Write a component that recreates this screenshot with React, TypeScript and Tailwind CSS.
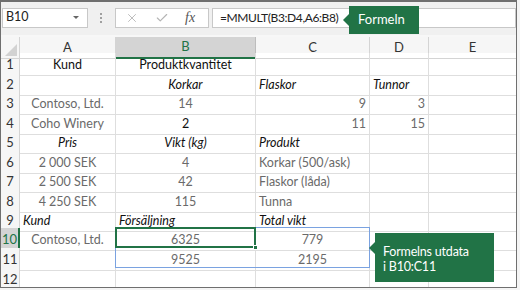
import { X, Check } from 'lucide-react';

type Cell = {
  t?: string;
  a?: 'l' | 'c' | 'r';
  i?: boolean;
  dark?: boolean;
};

const cols = ['A', 'B', 'C', 'D', 'E'];
const heights = [20, 19, 20, 19, 20, 19, 20, 19, 19, 20, 20, 18];

const rows: Cell[][] = [
  [{ t: 'Kund', a: 'c', dark: true }, { t: 'Produktkvantitet', a: 'c', dark: true }, {}, {}, {}],
  [{}, { t: 'Korkar', a: 'c', i: true }, { t: 'Flaskor', i: true }, { t: 'Tunnor', i: true }, {}],
  [{ t: 'Contoso, Ltd.', a: 'c' }, { t: '14', a: 'c' }, { t: '9', a: 'r' }, { t: '3', a: 'r' }, {}],
  [{ t: 'Coho Winery', a: 'c' }, { t: '2', a: 'c', dark: true }, { t: '11', a: 'r' }, { t: '15', a: 'r' }, {}],
  [{ t: 'Pris', a: 'c', i: true }, { t: 'Vikt (kg)', a: 'c', i: true }, { t: 'Produkt', i: true }, {}, {}],
  [{ t: '2 000 SEK', a: 'c' }, { t: '4', a: 'c' }, { t: 'Korkar (500/ask)' }, {}, {}],
  [{ t: '2 500 SEK', a: 'c' }, { t: '42', a: 'c' }, { t: 'Flaskor (låda)' }, {}, {}],
  [{ t: '4 250 SEK', a: 'c' }, { t: '115', a: 'c' }, { t: 'Tunna' }, {}, {}],
  [{ t: 'Kund', i: true }, { t: 'Försäljning', i: true }, { t: 'Total vikt', i: true }, {}, {}],
  [{ t: 'Contoso, Ltd.', a: 'c' }, { t: '6325', a: 'c' }, { t: '779', a: 'c' }, {}, {}],
  [{}, { t: '9525', a: 'c' }, { t: '2195', a: 'c' }, {}, {}],
  [{}, {}, {}, {}, {}],
];

const grid = 'grid grid-cols-[19px_96px_140px_114px_59px_88px]';

export default function App() {
  return (
    <div className="w-[520px] h-[290px] bg-[#f4f4f4] font-['Lato',sans-serif]">
      <div className="relative w-[517px] h-[288px] border border-t-2 border-[#6f6f6f] bg-white overflow-hidden">
        {/* Formula bar */}
        <div className="flex items-center h-[33px] bg-[#f0f0f0] pb-[2px]">
          <div className="flex items-center justify-between w-[86px] h-[20px] ml-[1px] bg-white border border-[#c8c8c8] pl-[3px] pr-[8px] text-[12.5px] text-[#222]">
            <span>B10</span>
            <span className="border-x-[3px] border-t-[3px] border-x-transparent border-t-[#666]" />
          </div>
          <div className="flex flex-col gap-[2px] ml-[12px] mr-[13px]">
            <span className="w-[2px] h-[2px] bg-[#a0a0a0]" />
            <span className="w-[2px] h-[2px] bg-[#a0a0a0]" />
            <span className="w-[2px] h-[2px] bg-[#a0a0a0]" />
          </div>
          <div className="flex items-center w-[94px] h-[20px] bg-white border border-[#c8c8c8] pl-[9px]">
            <X className="w-[14px] h-[14px] text-[#b4b4b4]" strokeWidth={1.5} />
            <Check className="w-[14px] h-[14px] text-[#b4b4b4] ml-[16px]" strokeWidth={2} />
            <span className="ml-[16px] font-['Liberation_Serif',serif] italic text-[14px] text-[#555]">fx</span>
          </div>
          <div className="flex items-center flex-1 h-[20px] ml-[3px] bg-white border border-[#c8c8c8] pl-[7px] text-[12px] tracking-[-0.4px] text-[#222]">
            =MMULT(B3:D4,A6:B8)
          </div>
        </div>
        <div className="h-[2px] bg-[#f7f7f7]" />

        {/* Column headers */}
        <div className={`${grid} h-[16px] bg-[#f6f6f6] text-[13px] text-[#333]`}>
          <div className="relative border-r border-b border-[#d4d4d4]">
            <svg className="absolute right-[2px] bottom-[2px]" width="12" height="12">
              <polygon points="12,0 12,12 0,12" fill="#d2d2d2" />
            </svg>
          </div>
          {cols.map((c) => (
            <div
              key={c}
              className={
                c === 'B'
                  ? 'flex items-center justify-center bg-[#d4d4d4] text-[#217346] border-r border-[#bdbdbd] border-b-2 border-b-[#217346]'
                  : 'flex items-center justify-center border-r border-b border-[#d4d4d4]'
              }
            >
              {c}
            </div>
          ))}
        </div>

        {/* Rows */}
        {rows.map((r, ri) => (
          <div key={ri} className={`${grid} text-[12.5px]`} style={{ height: heights[ri] }}>
            <div
              className={
                ri === 9
                  ? 'flex items-center justify-center pt-[2px] bg-[#d4d4d4] text-[#217346] border-b border-[#bdbdbd] border-r-2 border-r-[#217346] text-[13px]'
                  : 'flex items-center justify-center pt-[2px] bg-[#f6f6f6] text-[#333] border-r border-b border-[#d4d4d4] text-[13px]'
              }
            >
              {ri + 1}
            </div>
            {r.map((c, ci) => (
              <div
                key={ci}
                className={[
                  'flex items-center pt-[2px] whitespace-nowrap overflow-visible border-r border-b border-[#dedede] leading-none',
                  c.a === 'c' ? 'justify-center' : c.a === 'r' ? 'justify-end pr-[3px]' : 'justify-start pl-[3px]',
                  c.i ? 'italic text-[#111]' : c.dark ? 'text-[#111]' : 'text-[#6a6a6a]',
                ].join(' ')}
              >
                {c.t}
              </div>
            ))}
          </div>
        ))}

        {/* Selection B10:C11 */}
        <div className="absolute left-[114px] top-[225px] w-[255px] h-[41px] border border-[#7aa2e0]" />
        <div className="absolute left-[114px] top-[225px] w-[141px] h-[21px] border-2 border-[#217346]" />
        <div className="absolute left-[252px] top-[243px] w-[5px] h-[5px] bg-[#217346] border border-white" />

        {/* Callout: Formeln */}
        <div className="absolute left-[342px] top-[4px] flex items-center">
          <span className="border-y-[6px] border-r-[6px] border-y-transparent border-r-[#217346]" />
          <div className="flex items-center h-[28px] w-[70px] bg-[#217346] pl-[9px] text-[13px] text-white">
            Formeln
          </div>
        </div>

        {/* Callout: Formelns utdata */}
        <div className="absolute left-[368px] top-[231px] flex items-start">
          <span className="mt-[9px] border-y-[6px] border-r-[6px] border-y-transparent border-r-[#217346]" />
          <div className="flex flex-col justify-center h-[49px] w-[119px] bg-[#217346] pl-[8px] pt-[3px] text-[12.5px] tracking-[-0.2px] leading-[15px] text-white">
            <span>Formelns utdata</span>
            <span>i B10:C11</span>
          </div>
        </div>
      </div>
    </div>
  );
}
